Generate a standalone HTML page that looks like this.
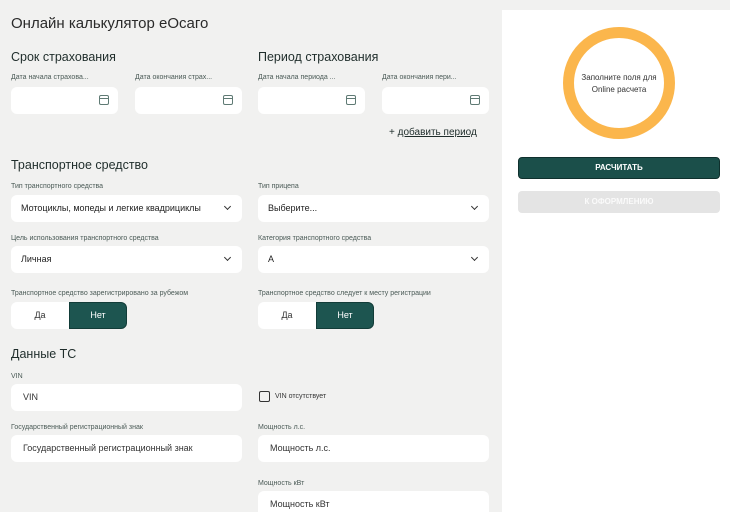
<!DOCTYPE html>
<html><head><meta charset="utf-8"><style>
*{box-sizing:border-box;margin:0;padding:0}
html,body{width:730px;height:512px;overflow:hidden}
body{background:#f1f1f0;font-family:"Liberation Sans","DejaVu Sans",sans-serif;color:#222;position:relative}
.a{position:absolute}
.h1{font-size:15px;color:#2a2a2a}
.h2{font-size:12.5px;color:#1f2d2b}
.lb{font-size:7px;color:#4a5a56;white-space:nowrap}
.in{background:#fff;border-radius:6px;height:27px}
.sel{font-size:9px;color:#222;padding-left:10px;line-height:27px}
.chev{position:absolute;right:12px;top:9px;width:5px;height:5px;border-right:1.5px solid #333;border-bottom:1.5px solid #333;transform:rotate(45deg)}
.cal{position:absolute;right:9px;top:8px;width:10px;height:10px;border:1.3px solid #5f7a74;border-radius:2px}
.cal:before{content:"";position:absolute;left:0;right:0;top:2px;border-top:1.3px solid #5f7a74}
.ph{font-size:9px;color:#333;padding-left:12px;line-height:27px}
.tg{font-size:9px;line-height:27px;text-align:center}
</style></head><body>
<div class="a h1" style="left:11px;top:15px">Онлайн калькулятор eOсаго</div>
<div class="a h2" style="left:11px;top:50px">Срок страхования</div>
<div class="a h2" style="left:258px;top:50px">Период страхования</div>
<div class="a lb" style="left:11px;top:74px">Дата начала страхова...</div>
<div class="a lb" style="left:135px;top:74px">Дата окончания страх...</div>
<div class="a lb" style="left:258px;top:74px">Дата начала периода ...</div>
<div class="a lb" style="left:382px;top:74px">Дата окончания пери...</div>
<div class="a in" style="left:11px;top:87px;width:107px"><div class="cal"></div></div>
<div class="a in" style="left:135px;top:87px;width:107px"><div class="cal"></div></div>
<div class="a in" style="left:258px;top:87px;width:107px"><div class="cal"></div></div>
<div class="a in" style="left:382px;top:87px;width:107px"><div class="cal"></div></div>
<div class="a" style="left:389px;top:127px;font-size:10px;color:#1f2d2b">+ <span style="text-decoration:underline">добавить период</span></div>
<div class="a h2" style="left:11px;top:158px">Транспортное средство</div>
<div class="a lb" style="left:11px;top:183px">Тип транспортного средства</div>
<div class="a lb" style="left:258px;top:183px">Тип прицепа</div>
<div class="a in sel" style="left:11px;top:195px;width:231px">Мотоциклы, мопеды и легкие квадрициклы<div class="chev"></div></div>
<div class="a in sel" style="left:258px;top:195px;width:231px">Выберите...<div class="chev"></div></div>
<div class="a lb" style="left:11px;top:235px">Цель использования транспортного средства</div>
<div class="a lb" style="left:258px;top:235px">Категория транспортного средства</div>
<div class="a in sel" style="left:11px;top:246px;width:231px">Личная<div class="chev"></div></div>
<div class="a in sel" style="left:258px;top:246px;width:231px">A<div class="chev"></div></div>
<div class="a lb" style="left:11px;top:290px">Транспортное средство зарегистрировано за рубежом</div>
<div class="a lb" style="left:258px;top:290px">Транспортное средство следует к месту регистрации</div>
<div class="a in" style="left:11px;top:302px;width:116px"></div>
<div class="a tg" style="left:11px;top:302px;width:58px;color:#333">Да</div>
<div class="a tg" style="left:69px;top:302px;width:58px;height:27px;background:#1d5550;border-radius:0 6px 6px 0;color:#fff;border:1px solid #123c38;line-height:25px">Нет</div>
<div class="a in" style="left:258px;top:302px;width:116px"></div>
<div class="a tg" style="left:258px;top:302px;width:58px;color:#333">Да</div>
<div class="a tg" style="left:316px;top:302px;width:58px;height:27px;background:#1d5550;border-radius:0 6px 6px 0;color:#fff;border:1px solid #123c38;line-height:25px">Нет</div>
<div class="a h2" style="left:11px;top:347px">Данные ТС</div>
<div class="a lb" style="left:11px;top:373px">VIN</div>
<div class="a in ph" style="left:11px;top:384px;width:231px">VIN</div>
<div class="a" style="left:259px;top:391px;width:11px;height:11px;border:1.5px solid #333;border-radius:2px"></div>
<div class="a lb" style="left:275px;top:393px;color:#333">VIN отсутствует</div>
<div class="a lb" style="left:11px;top:424px">Государственный регистрационный знак</div>
<div class="a in ph" style="left:11px;top:435px;width:231px">Государственный регистрационный знак</div>
<div class="a lb" style="left:258px;top:424px">Мощность л.с.</div>
<div class="a in ph" style="left:258px;top:435px;width:231px">Мощность л.с.</div>
<div class="a lb" style="left:258px;top:480px">Мощность кВт</div>
<div class="a in ph" style="left:258px;top:491px;width:231px">Мощность кВт</div>
<div class="a" style="left:502px;top:10px;width:228px;height:502px;background:#fff"></div>
<div class="a" style="left:563px;top:27px;width:112px;height:112px;border-radius:50%;border:11px solid #fbb64c"></div>
<div class="a" style="left:563px;top:72px;width:112px;text-align:center;font-size:8px;line-height:12px;color:#333">Заполните поля для<br>Online расчета</div>
<div class="a" style="left:518px;top:157px;width:202px;height:22px;background:#1b4f4a;border:1px solid #0f302d;border-radius:4px;color:#fff;font-size:8px;font-weight:bold;text-align:center;line-height:20px">РАСЧИТАТЬ</div>
<div class="a" style="left:518px;top:191px;width:202px;height:22px;background:#e4e4e4;border-radius:4px;color:#fafafa;font-size:8px;font-weight:bold;text-align:center;line-height:22px">К ОФОРМЛЕНИЮ</div>
</body></html>
